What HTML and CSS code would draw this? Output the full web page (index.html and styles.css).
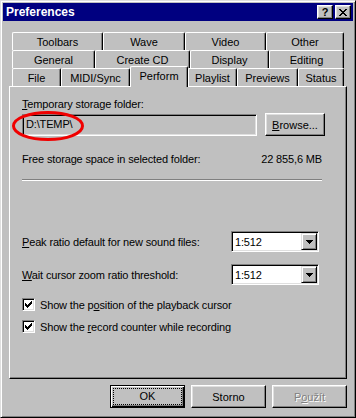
FILE: index.html
```html
<!DOCTYPE html>
<html lang="en">
<head>
    <meta charset="UTF-8">
    <title>Preferences</title>
    <link rel="stylesheet" href="styles.css">
</head>
<body>

  <div class="window">
    <div class="titlebar">
      <span class="title">Preferences</span>
      <div class="caption-buttons">
        <button class="caption-btn help">?</button>
        <button class="caption-btn close">
          <svg width="8" height="7" viewBox="0 0 8 7" shape-rendering="crispEdges">
            <path fill="#000" d="M0 0h2v1H0zM6 0h2v1H6zM1 1h2v1H1zM5 1h2v1H5zM2 2h4v1H2zM3 3h2v1H3zM2 4h4v1H2zM1 5h2v1H1zM5 5h2v1H5zM0 6h2v1H0zM6 6h2v1H6z"/>
          </svg>
        </button>
      </div>
    </div>

    <div class="content">
      <div class="tabs">
        <div class="tab-row">
          <div class="tab" style="width:91px">Toolbars</div>
          <div class="tab" style="width:82px">Wave</div>
          <div class="tab" style="width:81px">Video</div>
          <div class="tab" style="width:78px">Other</div>
        </div>
        <div class="tab-row">
          <div class="tab" style="width:83px">General</div>
          <div class="tab" style="width:95px">Create CD</div>
          <div class="tab" style="width:79px">Display</div>
          <div class="tab" style="width:75px">Editing</div>
        </div>
        <div class="tab-row front">
          <div class="tab" style="width:49px">File</div>
          <div class="tab" style="width:69px">MIDI/Sync</div>
          <div class="tab selected" style="width:58px">Perform</div>
          <div class="tab" style="width:49px">Playlist</div>
          <div class="tab" style="width:61px">Previews</div>
          <div class="tab" style="width:46px">Status</div>
        </div>
      </div>

      <div class="panel">
        <div class="line"><u>T</u>emporary storage folder:</div>
        <div class="folder-row">
          <div class="edit">D:\TEMP\</div>
          <button class="btn browse"><u>B</u>rowse...</button>
          <!-- red marker drawn over the field -->
          <svg class="marker" width="74" height="32" viewBox="0 0 74 32">
            <ellipse cx="37" cy="16" rx="34.5" ry="13.5" fill="none" stroke="#f00000" stroke-width="3"/>
          </svg>
        </div>
        <div class="line free-row">
          <span>Free storage space in selected folder:</span>
          <span>22 855,6 MB</span>
        </div>
        <div class="separator"></div>

        <div class="combo-row peak">
          <span><u>P</u>eak ratio default for new sound files:</span>
          <div class="combo">
            <span class="combo-value">1:512</span>
            <span class="combo-btn">
              <svg width="7" height="4" viewBox="0 0 7 4" shape-rendering="crispEdges"><path fill="#000" d="M0 0h7v1H0zM1 1h5v1H1zM2 2h3v1H2zM3 3h1v1H3z"/></svg>
            </span>
          </div>
        </div>
        <div class="combo-row wait">
          <span><u>W</u>ait cursor zoom ratio threshold:</span>
          <div class="combo">
            <span class="combo-value">1:512</span>
            <span class="combo-btn">
              <svg width="7" height="4" viewBox="0 0 7 4" shape-rendering="crispEdges"><path fill="#000" d="M0 0h7v1H0zM1 1h5v1H1zM2 2h3v1H2zM3 3h1v1H3z"/></svg>
            </span>
          </div>
        </div>

        <div class="check-row first">
          <span class="checkbox">
            <svg width="7" height="7" viewBox="0 0 7 7" shape-rendering="crispEdges"><path fill="#000" d="M6 0h1v3H6zM5 1h1v3H5zM0 2h1v3H0zM4 2h1v3H4zM1 3h1v3H1zM3 3h1v3H3zM2 4h1v3H2z"/></svg>
          </span>
          <span>Show the p<u>o</u>sition of the playback cursor</span>
        </div>
        <div class="check-row second">
          <span class="checkbox">
            <svg width="7" height="7" viewBox="0 0 7 7" shape-rendering="crispEdges"><path fill="#000" d="M6 0h1v3H6zM5 1h1v3H5zM0 2h1v3H0zM4 2h1v3H4zM1 3h1v3H1zM3 3h1v3H3zM2 4h1v3H2z"/></svg>
          </span>
          <span>Show the <u>r</u>ecord counter while recording</span>
        </div>
      </div>

      <div class="actions">
        <button class="btn default"><span class="focus">OK</span></button>
        <button class="btn">Storno</button>
        <button class="btn disabled">P<u>o</u>užít</button>
      </div>
    </div>
  </div>

</body>
</html>
```

FILE: styles.css
```css
body {
  margin: 0;
  background-color: #c0c0c0;
  font-family: "Liberation Sans", Arial, sans-serif;
  font-size: 11px;
  color: #000;
}

button {
  font: inherit;
  color: inherit;
  padding: 0;
}

.window {
  box-sizing: border-box;
  width: 356px;
  height: 418px;
  padding: 2px;
  background-color: #c0c0c0;
  border: 1px solid;
  border-color: #dfdfdf #000 #000 #dfdfdf;
  box-shadow: inset 1px 1px #fff, inset -1px -1px #808080;
}

.titlebar {
  height: 18px;
  padding: 0 2px 0 3px;
  background-color: #000080;
  color: #fff;
  display: flex;
  align-items: center;
  justify-content: space-between;
}

.title {
  font-weight: bold;
  font-size: 12px;
}

.caption-buttons {
  display: flex;
  gap: 2px;
}

.caption-btn {
  box-sizing: border-box;
  width: 16px;
  height: 14px;
  background-color: #c0c0c0;
  border: 1px solid;
  border-color: #fff #000 #000 #fff;
  box-shadow: inset -1px -1px #808080, inset 1px 1px #dfdfdf;
  display: flex;
  align-items: center;
  justify-content: center;
}

.caption-btn.help {
  font-weight: bold;
  font-size: 11px;
  line-height: 12px;
  color: #000;
}

.content {
  padding: 11px 6px 0 6px;
}

.tabs {
  margin: 0 3px;
}

.tab-row {
  display: flex;
  height: 18px;
}

.tab-row.front {
  align-items: flex-end;
}

.tab {
  box-sizing: border-box;
  height: 18px;
  padding-top: 1px;
  border: 1px solid #fff;
  border-bottom: none;
  border-right-color: #000;
  border-radius: 2px 2px 0 0;
  box-shadow: inset -1px 0 #808080;
  display: flex;
  align-items: center;
  justify-content: center;
  white-space: nowrap;
}

.tab.selected {
  position: relative;
  z-index: 1;
  height: 21px;
  margin-bottom: -1px;
  padding-top: 0;
  padding-bottom: 2px;
  background-color: #c0c0c0;
}

.panel {
  box-sizing: border-box;
  height: 293px;
  padding: 11px 24px 0 12px;
  letter-spacing: -0.15px;
  border: 1px solid;
  border-color: #fff #000 #000 #fff;
  box-shadow: inset -1px -1px #808080;
}

.line {
  height: 13px;
  line-height: 13px;
  white-space: nowrap;
}

.folder-row {
  position: relative;
  display: flex;
  align-items: flex-start;
  gap: 8px;
  height: 23px;
  margin-top: 2px;
}

.edit {
  box-sizing: border-box;
  flex-shrink: 0;
  width: 235px;
  height: 22px;
  margin-top: 1px;
  padding: 0 3px;
  line-height: 18px;
  border: 1px solid;
  border-color: #808080 #fff #fff #808080;
  box-shadow: inset 1px 1px #000, inset -1px -1px #dfdfdf;
}

.marker {
  position: absolute;
  left: -11px;
  top: -3px;
}

.btn {
  box-sizing: border-box;
  flex-shrink: 0;
  width: 75px;
  height: 23px;
  background-color: #c0c0c0;
  border: 1px solid;
  border-color: #fff #000 #000 #fff;
  box-shadow: inset -1px -1px #808080, inset 1px 1px #dfdfdf;
}

.btn.browse {
  width: 60px;
}

.btn.default {
  border-color: #000;
  box-shadow: inset 1px 1px #fff, inset -1px -1px #000, inset -2px -2px #808080;
  padding: 2px;
}

.btn.default .focus {
  display: block;
  height: 15px;
  line-height: 15px;
  border: 1px dotted #000;
}

.btn.disabled {
  color: #808080;
  text-shadow: 1px 1px #fff;
}

.free-row {
  display: flex;
  justify-content: space-between;
  margin-top: 17px;
}

.separator {
  height: 0;
  margin-top: 13px;
  border-top: 1px solid #808080;
  border-bottom: 1px solid #fff;
}

.combo-row {
  display: flex;
  align-items: center;
  justify-content: space-between;
  height: 21px;
}

.combo-row.peak {
  margin-top: 50px;
}

.combo-row.wait {
  margin-top: 12px;
}

.combo {
  box-sizing: border-box;
  width: 88px;
  height: 21px;
  margin-right: 3px;
  padding: 1px;
  background-color: #fff;
  border: 1px solid;
  border-color: #808080 #fff #fff #808080;
  box-shadow: inset 1px 1px #000, inset -1px -1px #dfdfdf;
  display: flex;
  align-items: center;
}

.combo-value {
  flex: 1;
  padding-left: 2px;
}

.combo-btn {
  box-sizing: border-box;
  width: 16px;
  height: 17px;
  background-color: #c0c0c0;
  border: 1px solid;
  border-color: #dfdfdf #000 #000 #dfdfdf;
  box-shadow: inset 1px 1px #fff, inset -1px -1px #808080;
  display: flex;
  align-items: center;
  justify-content: center;
}

.check-row {
  display: flex;
  align-items: center;
  gap: 5px;
  height: 13px;
  white-space: nowrap;
}

.check-row.first {
  margin-top: 13px;
}

.check-row.second {
  margin-top: 9px;
}

.checkbox {
  box-sizing: border-box;
  width: 13px;
  height: 13px;
  background-color: #fff;
  border: 1px solid;
  border-color: #808080 #fff #fff #808080;
  box-shadow: inset 1px 1px #000, inset -1px -1px #dfdfdf;
  display: flex;
  align-items: center;
  justify-content: center;
}

.actions {
  display: flex;
  justify-content: flex-end;
  gap: 6px;
  margin-top: 6px;
}
```
